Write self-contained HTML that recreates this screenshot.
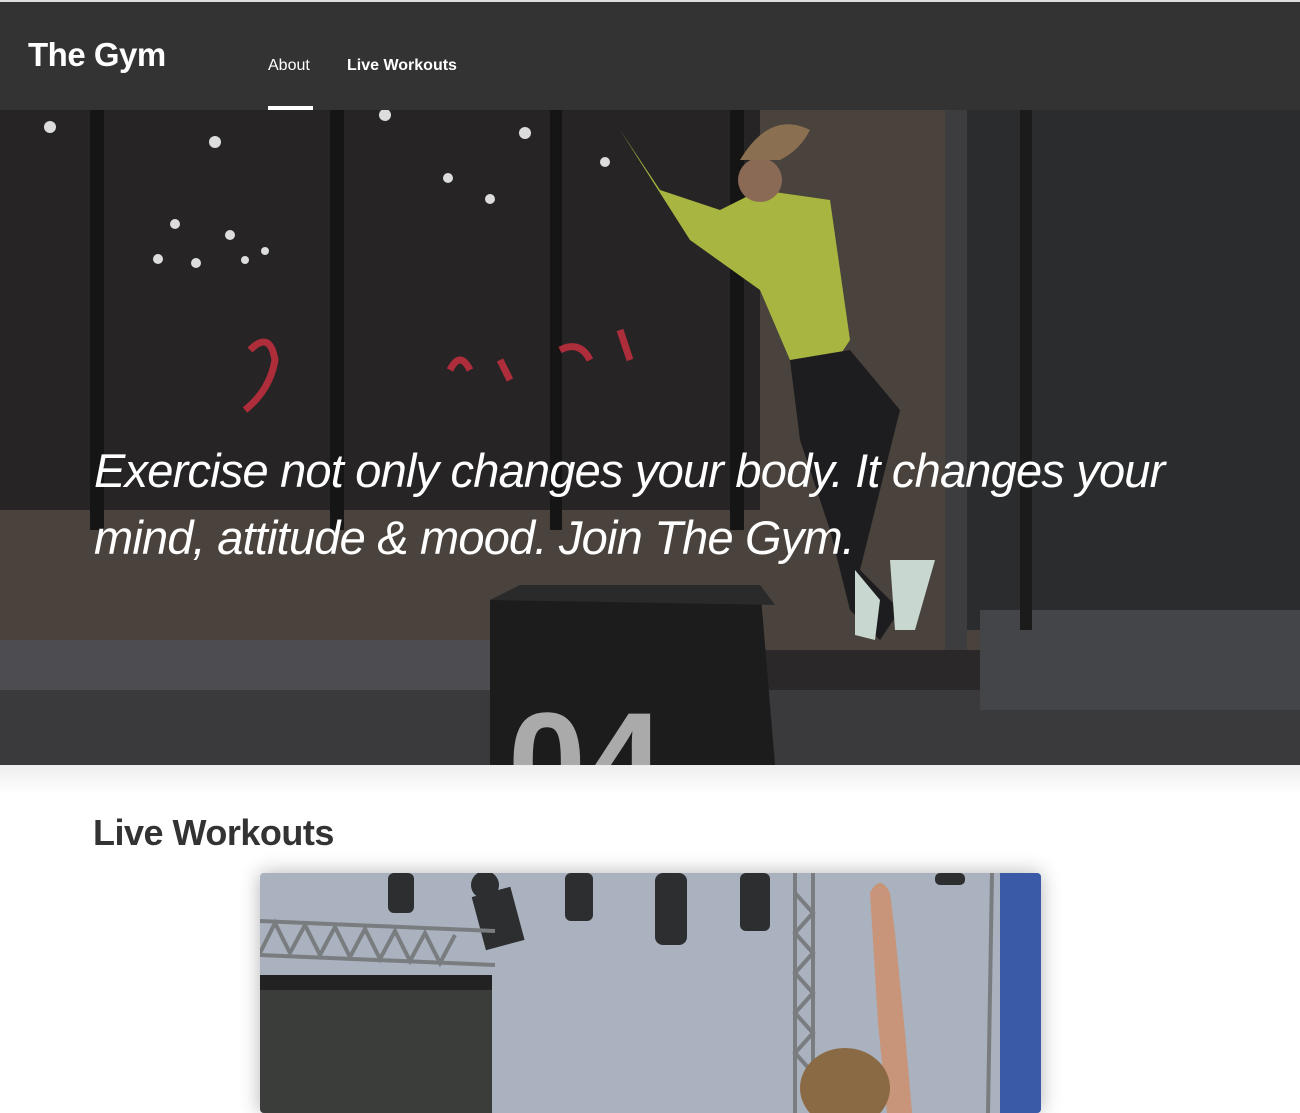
<!DOCTYPE html>
<html><head><meta charset="utf-8"><style>
*{margin:0;padding:0;box-sizing:border-box}
body{width:1300px;height:1086px;overflow:hidden;background:#fff;font-family:"Liberation Sans",sans-serif}
.top{position:absolute;left:0;top:0;width:1300px;height:2px;background:#ddd}
header{position:absolute;left:0;top:2px;width:1300px;height:108px;background:#333}
.logo{position:absolute;left:28px;top:34px;color:#fff;font-size:33px;font-weight:bold;letter-spacing:-0.5px}
.nav{position:absolute;top:55px;color:#fff;font-size:16px}
.ul{position:absolute;left:268px;top:104px;width:45px;height:4px;background:#fff}
.hero{position:absolute;left:0;top:110px;width:1300px;height:655px;overflow:hidden;background:#2f2c2c}
.quote{position:absolute;left:94px;top:327px;width:1150px;color:#fff;font-style:italic;font-size:47px;line-height:67px;letter-spacing:-0.8px}
.shadow{position:absolute;left:0;top:765px;width:1300px;height:30px;background:linear-gradient(#eee,#fff)}
h2{position:absolute;left:93px;top:812px;font-size:36px;color:#333;font-weight:bold;letter-spacing:-0.5px}
.card{position:absolute;left:260px;top:873px;width:781px;height:240px;box-shadow:0 0 20px rgba(0,0,0,.3);border-radius:4px;overflow:hidden;background:#a6b0bd}
</style></head><body>
<div class="top"></div>
<header>
<div class="logo">The Gym</div>
<div class="nav" style="left:268px">About</div>
<div class="nav" style="left:347px;font-weight:bold">Live Workouts</div>
<div class="ul"></div>
</header>
<div class="hero">
<svg width="1300" height="655" viewBox="0 0 1300 655">
<rect width="1300" height="655" fill="#2a2828"/>
<rect x="0" y="0" width="760" height="400" fill="#262425"/>
<rect x="0" y="400" width="1000" height="140" fill="#4a433d"/>
<rect x="760" y="0" width="200" height="540" fill="#4a423c"/>
<rect x="960" y="0" width="340" height="520" fill="#2b2c2e"/>
<rect x="0" y="530" width="500" height="70" fill="#4d4c50"/>
<rect x="0" y="580" width="1300" height="75" fill="#3a393c"/>
<rect x="980" y="500" width="320" height="100" fill="#444549"/>
<rect x="90" y="0" width="14" height="420" fill="#151515"/>
<rect x="330" y="0" width="14" height="420" fill="#151515"/>
<rect x="550" y="0" width="12" height="420" fill="#151515"/>
<rect x="730" y="0" width="14" height="420" fill="#151515"/>
<rect x="945" y="0" width="22" height="540" fill="#3d3d40"/>
<rect x="1020" y="0" width="12" height="520" fill="#1b1b1c"/>
<g fill="#ddd"><circle cx="50" cy="17" r="6"/><circle cx="215" cy="32" r="6"/><circle cx="385" cy="5" r="6"/><circle cx="525" cy="23" r="6"/><circle cx="448" cy="68" r="5"/><circle cx="490" cy="89" r="5"/><circle cx="175" cy="114" r="5"/><circle cx="230" cy="125" r="5"/><circle cx="158" cy="149" r="5"/><circle cx="196" cy="153" r="5"/><circle cx="265" cy="141" r="4"/><circle cx="245" cy="150" r="4"/><circle cx="605" cy="52" r="5"/></g>
<g stroke="#d03040" stroke-width="7" fill="none" opacity="0.8"><path d="M250 240 q20 -20 25 10 q-5 30 -30 50"/><path d="M450 260 q10 -20 20 0 M500 250 l10 20 M560 240 q20 -10 30 10 M620 220 l10 30"/></g>
<path d="M620 20 L660 80 L720 100 L760 80 L830 90 L850 230 L830 260 L790 250 L760 180 L690 130 Z" fill="#a8b540"/>
<circle cx="760" cy="70" r="22" fill="#8a6a55"/>
<path d="M740 50 q30 -50 70 -30 q-10 20 -30 30z" fill="#8a7050"/>
<path d="M790 250 L850 240 L900 300 L880 380 L860 460 L900 500 L880 530 L850 500 L830 420 L800 330 Z" fill="#1d1d1f"/>
<path d="M855 460 l25 30 l-5 40 l-20 -5z M890 450 l45 0 l-20 70 l-20 0z" fill="#c8d8d0"/>
<path d="M490 490 L760 475 L775 655 L490 655 Z" fill="#1c1c1d"/>
<path d="M490 490 L520 475 L760 475 L775 495 Z" fill="#2a2a2b"/>
<text x="508" y="700" font-family="Liberation Sans" font-size="140" font-weight="bold" fill="#aaa">04</text>
</svg>
<div class="quote">Exercise not only changes your body. It changes your<br>mind, attitude &amp; mood. Join The Gym.</div>
</div>
<div class="shadow"></div>
<h2>Live Workouts</h2>
<div class="card">
<svg width="781" height="240" viewBox="0 0 781 240">
<rect width="781" height="240" fill="#a9b2be"/>
<g fill="#2c2e30"><rect x="128" y="0" width="26" height="40" rx="6"/><rect x="305" y="0" width="28" height="48" rx="6"/><rect x="395" y="0" width="32" height="72" rx="8"/><rect x="480" y="0" width="30" height="58" rx="6"/><rect x="675" y="0" width="30" height="12" rx="5"/><rect x="218" y="18" width="40" height="55" transform="rotate(-15 238 45)"/><circle cx="225" cy="12" r="14"/></g>
<g stroke="#7a7d80" stroke-width="4" fill="none"><line x1="0" y1="48" x2="235" y2="58"/><line x1="0" y1="82" x2="235" y2="92"/><path d="M0 80 L15 50 L30 80 L45 52 L60 82 L75 54 L90 84 L105 56 L120 86 L135 58 L150 88 L165 60 L180 90 L195 62"/><line x1="535" y1="0" x2="535" y2="240"/><line x1="553" y1="0" x2="553" y2="240"/><path d="M535 20 L553 40 L535 60 L553 80 L535 100 L553 120 L535 140 L553 160 L535 180 L553 200"/><line x1="732" y1="0" x2="728" y2="240"/></g>
<rect x="0" y="102" width="232" height="15" fill="#222"/>
<rect x="0" y="117" width="232" height="130" fill="#3b3d3a"/>
<rect x="740" y="0" width="41" height="240" fill="#3a5aa8"/>
<path d="M610 20 q10 -20 20 0 l5 40 l10 100 l8 90 l-25 0 l-10 -100 z" fill="#c9957a"/>
<ellipse cx="585" cy="215" rx="45" ry="40" fill="#8a6a45"/>
</svg>
</div>
</body></html>
